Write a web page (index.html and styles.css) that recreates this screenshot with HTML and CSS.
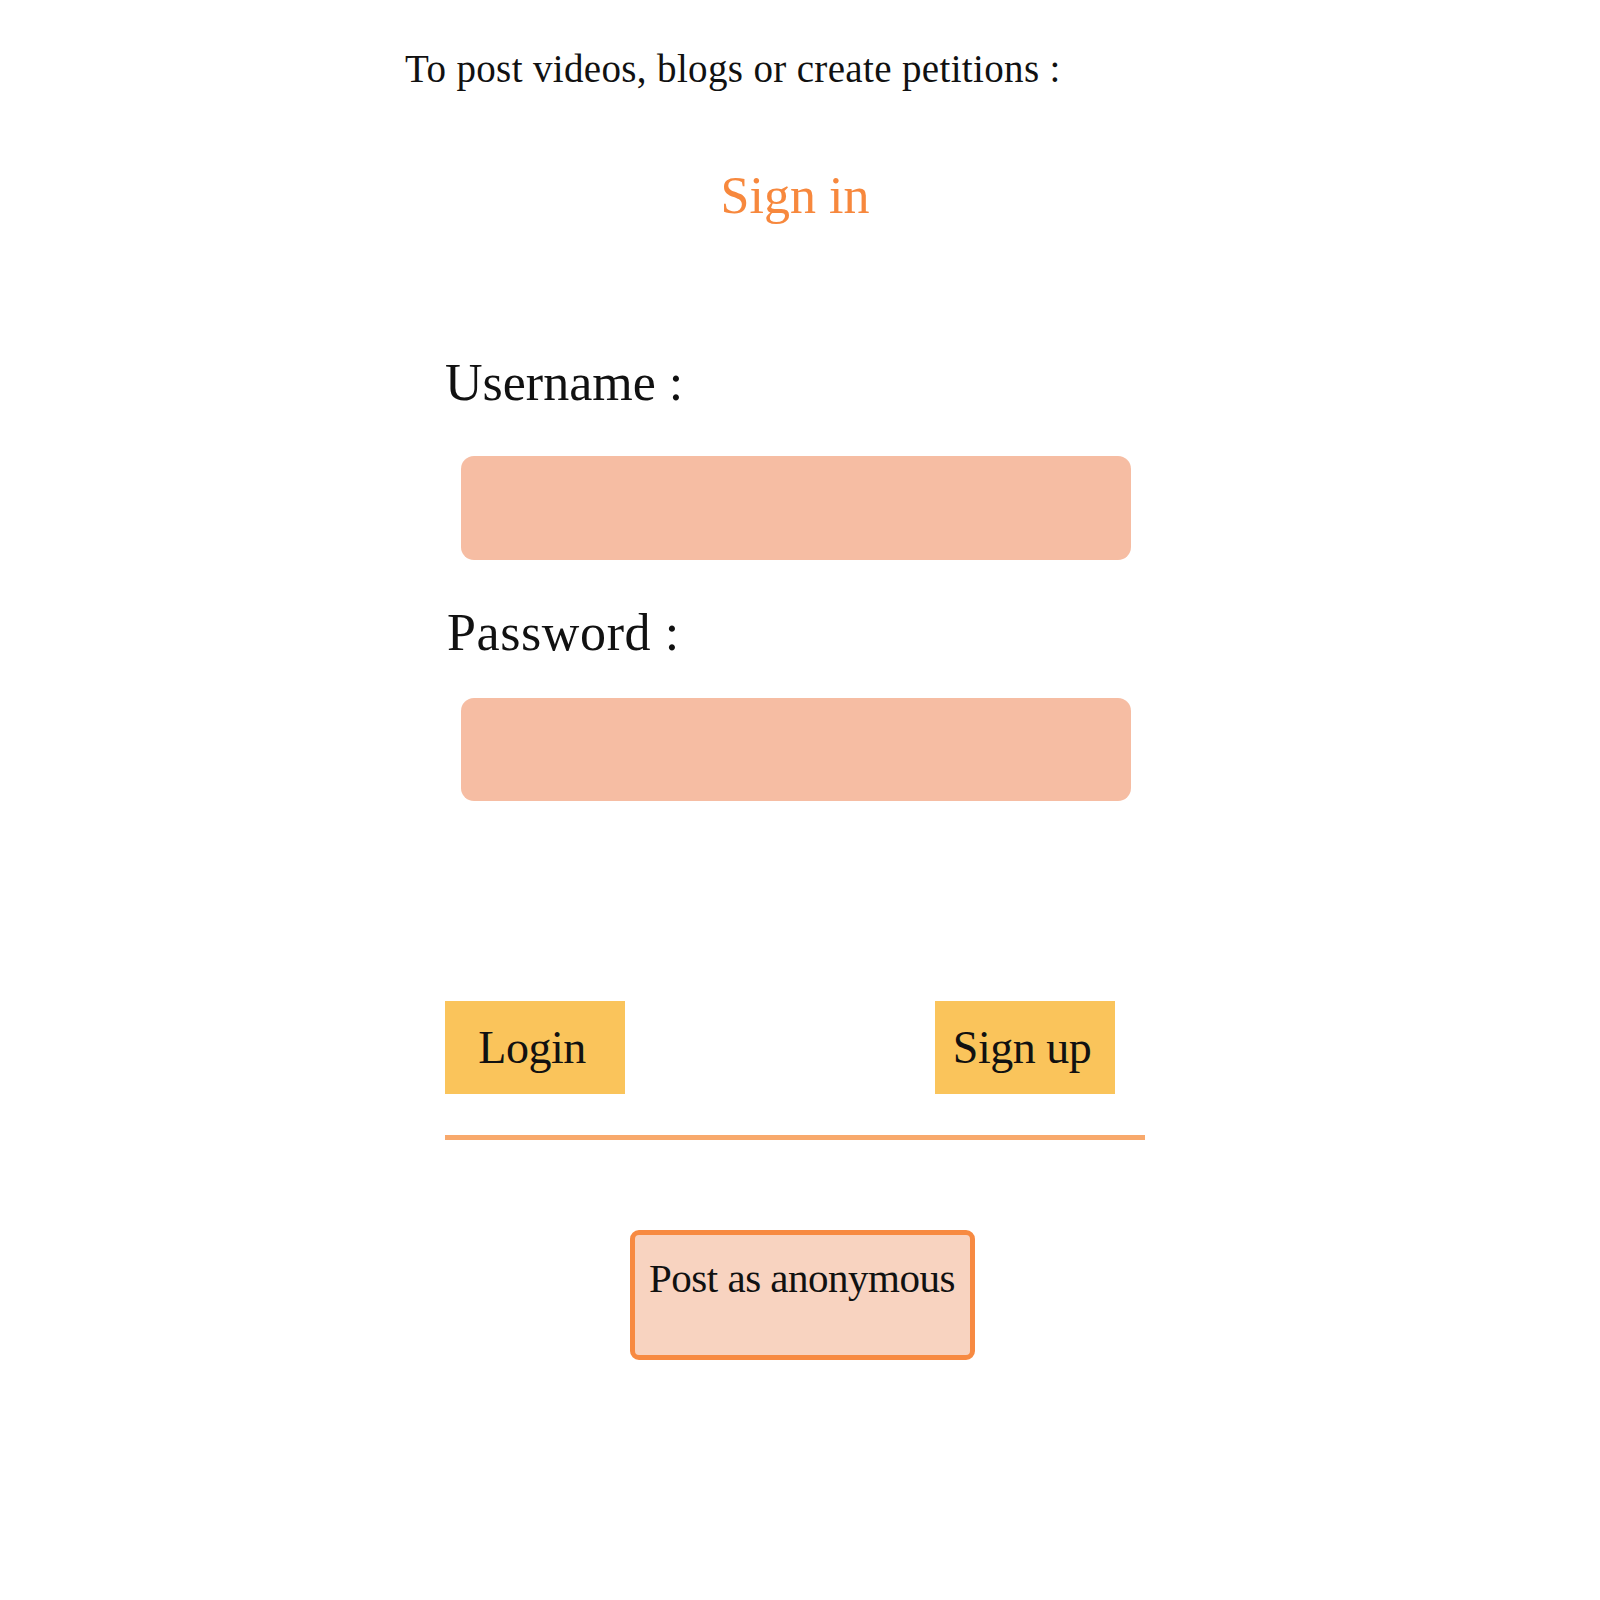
FILE: index.html
```html
<!DOCTYPE html>
<html lang="en">
<head>
<meta charset="utf-8">
<title>Sign in</title>
<link rel="stylesheet" href="styles.css">
</head>
<body>
<div class="page">
  <p class="intro">To post videos, blogs or create petitions :</p>
  <form class="form">
    <h1 class="title">Sign in</h1>
    <label class="label label-user">Username :</label>
    <div class="field field-user"></div>
    <label class="label label-pass">Password :</label>
    <div class="field field-pass"></div>
    <div class="actions">
      <button type="button" class="btn">Login</button>
      <button type="button" class="btn">Sign up</button>
    </div>
    <div class="rule"></div>
    <div class="anon-row">
      <button type="button" class="anon">Post as anonymous</button>
    </div>
  </form>
</div>
</body>
</html>
```
FILE: styles.css
```css
html, body {
  margin: 0;
  padding: 0;
  background: #ffffff;
}
body {
  font-family: "Liberation Serif", "DejaVu Serif", serif;
  color: #111111;
}
.page {
  padding: 47px 0 0 405px;
}
.intro {
  margin: 0;
  font-size: 39px;
  line-height: 44px;
  letter-spacing: 0.35px;
}
.form {
  margin-left: 40px;
  width: 700px;
  display: flex;
  flex-direction: column;
}
.title {
  margin: 75px 0 0 0;
  font-weight: normal;
  font-size: 52px;
  line-height: 60px;
  text-align: center;
  color: #f7883d;
}
.label {
  font-size: 52px;
  line-height: 60px;
}
.label-user {
  margin-top: 127px;
}
.label-pass {
  margin-top: 43px;
  padding-left: 2px;
  letter-spacing: 0.6px;
}
.field {
  margin: 43px 14px 0 16px;
  height: 104px;
  background: #f6bda3;
  border-radius: 13px;
}
.field-user {
  margin-top: 43px;
}
.field-pass {
  margin-top: 35px;
  height: 103px;
}
.actions {
  margin: 200px 30px 0 0;
  display: flex;
  justify-content: space-between;
}
.btn {
  width: 180px;
  height: 93px;
  border: none;
  background: #fac45b;
  font-family: "Liberation Serif", "DejaVu Serif", serif;
  font-size: 46px;
  line-height: 50px;
  color: #111111;
  padding: 0 6px 0 0;
  letter-spacing: -0.5px;
}
.rule {
  margin-top: 41px;
  height: 5px;
  background: #f8a96c;
}
.anon-row {
  margin-top: 90px;
  display: flex;
  justify-content: center;
  padding-left: 14px;
}
.anon {
  width: 345px;
  height: 130px;
  box-sizing: border-box;
  border: 5px solid #f78a42;
  border-radius: 9px;
  background: #f8d3c0;
  font-family: "Liberation Serif", "DejaVu Serif", serif;
  font-size: 41px;
  line-height: 48px;
  color: #111111;
  padding: 19px 0 0 0;
  display: flex;
  justify-content: center;
  align-items: flex-start;
  letter-spacing: -0.5px;
}
```
